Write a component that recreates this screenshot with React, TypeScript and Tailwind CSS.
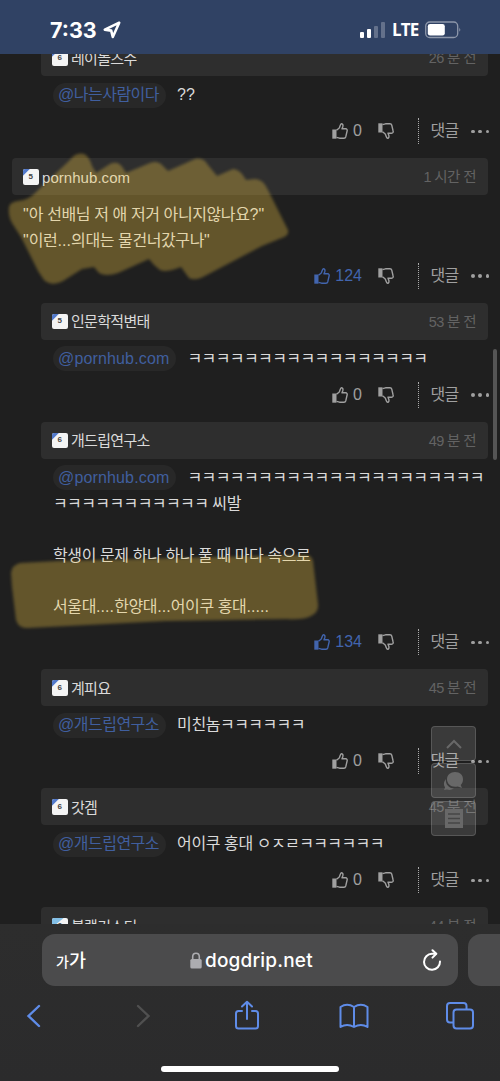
import clsx from "clsx";

type Comment = {
  id: number;
  author: string;
  level: number;
  time: string;
  nested?: boolean;
  mention?: string;
  lines: string[];
  likes: number;
  alt?: boolean;
};

const COMMENTS: Comment[] = [
  { id: 1, author: "레이놀즈수", level: 6, time: "26 분 전", nested: true, mention: "@나는사람이다", lines: ["??"], likes: 0 },
  { id: 2, author: "pornhub.com", level: 5, time: "1 시간 전", lines: ['"아 선배님 저 애 저거 아니지않나요?"', '"이런...의대는 물건너갔구나"'], likes: 124 },
  { id: 3, author: "인문학적변태", level: 5, time: "53 분 전", nested: true, mention: "@pornhub.com", lines: ["ㅋㅋㅋㅋㅋㅋㅋㅋㅋㅋㅋㅋㅋㅋㅋㅋㅋ"], likes: 0 },
  {
    id: 4,
    author: "개드립연구소",
    level: 6,
    time: "49 분 전",
    nested: true,
    mention: "@pornhub.com",
    lines: [
      "ㅋㅋㅋㅋㅋㅋㅋㅋㅋㅋㅋㅋㅋㅋㅋㅋㅋㅋㅋㅋㅋ",
      "ㅋㅋㅋㅋㅋㅋㅋㅋㅋㅋㅋ 씨발",
      "",
      "학생이 문제 하나 하나 풀 때 마다 속으로",
      "",
      "서울대....한양대...어이쿠 홍대.....",
    ],
    likes: 134,
  },
  { id: 5, author: "계피요", level: 6, time: "45 분 전", nested: true, mention: "@개드립연구소", lines: ["미친놈ㅋㅋㅋㅋㅋㅋ"], likes: 0 },
  { id: 6, author: "갓겜", level: 6, time: "45 분 전", nested: true, mention: "@개드립연구소", lines: ["어이쿠 홍대 ㅇㅈㄹㅋㅋㅋㅋㅋㅋ"], likes: 0 },
  { id: 7, author: "블랙기스디", level: 6, time: "44 분 전", nested: true, lines: [""], likes: 0, alt: true },
];

function Thumb({ down = false }: { down?: boolean }) {
  return (
    <svg viewBox="0 0 16 16" className={clsx("size-4 shrink-0", down && "-scale-y-100")} fill="none">
      <path d="M0.3 6.5H4.5V15.7H0.3Z" fill="currentColor" />
      <path
        d="M4.5 7.2L7 5.2C8.2 4 8 0.9 9.5 0.8C11 0.7 11.2 2.5 10.7 4L10 5.8H13.6C15 5.8 15.4 6.9 15.1 8L13.8 13.7C13.5 14.8 12.9 15.2 12 15.2H7.5L4.5 14.3"
        stroke="currentColor"
        strokeWidth="1.4"
        strokeLinejoin="round"
      />
    </svg>
  );
}

function Badge({ level, alt }: { level: number; alt?: boolean }) {
  return (
    <span className="relative flex size-[15.5px] shrink-0 items-center justify-center overflow-hidden rounded-[2px] bg-[#f4f4f4]">
      <svg viewBox="0 0 16 16" className="absolute inset-0">
        <path d={alt ? "M0 0H12L0 10Z" : "M0 0H7L0 7Z"} fill={alt ? "#83bfe6" : "#5279ca"} />
      </svg>
      <span className="relative font-['Liberation_Sans'] text-[8px] font-bold leading-none text-[#444]">{level}</span>
    </span>
  );
}

// Hangul runs sit tighter than punctuation, loose jamo tighter still
function CommentLine({ text }: { text: string }) {
  const runs = text.match(/[ㄱ-ㅎ]+|[."?]+|[^ㄱ-ㅎ."?]+/g) ?? [];
  return (
    <span>
      {runs.map((run, i) => (
        <span
          key={i}
          className={clsx(
            /^[ㄱ-ㅎ]/.test(run) ? "tracking-[-0.6px]" : /^[."?]/.test(run) ? "tracking-[0.1px]" : "tracking-[-0.4px]",
          )}
        >
          {run}
        </span>
      ))}
    </span>
  );
}

function CommentItem({ comment }: { comment: Comment }) {
  const { author, level, time, nested, mention, lines, likes, alt } = comment;
  return (
    <article className={clsx("mr-3", nested ? "ml-[41px]" : "ml-3")}>
      <header className="flex h-[37px] items-center rounded-[4px] bg-[#2e2e2e] pl-[11px] pr-3">
        <Badge level={level} alt={alt} />
        <span className="ml-[3.5px] pt-[2px] text-[15px] tracking-[-0.7px] text-[#dadada]">
          <span className={author === "pornhub.com" ? "tracking-[0.05px]" : ""}>{author}</span>
        </span>
        <span className="ml-auto pt-[2px] text-[14.5px] tracking-[-0.6px] text-[#636363]">{time}</span>
      </header>
      <div className={clsx("mr-[-20px] pt-[6px] text-base text-[#dadada]", nested ? "pl-3" : "pl-[11px]")}>
        {lines.map((line, i) => (
          <div key={i} className={clsx("flex h-[25.7px] items-center whitespace-pre", !(i === 0 && mention) && "pt-[2px]")}>
            {i === 0 && mention && (
              <span
                className={clsx(
                  "mr-[11px] flex h-[25px] items-center rounded-full bg-[#282828] pl-[5px] pr-[7px] text-[#405f9f]",
                  mention === "@pornhub.com" ? "tracking-[0.15px]" : "tracking-[-0.5px]",
                )}
              >
                {mention}
              </span>
            )}
            <CommentLine text={line} />
          </div>
        ))}
      </div>
      <div className="mb-[14px] mr-[-1px] mt-[10.3px] flex h-[26px] items-center justify-end text-base text-[#a0a0a0]">
        <span className={clsx("flex items-center gap-[5px]", likes > 0 && "text-[#4265ae]")}>
          <Thumb />
          {likes}
        </span>
        <span className="ml-4 flex">
          <Thumb down />
        </span>
        <span className="ml-6 h-full border-l border-dotted border-[#aaa]" />
        <span className="ml-[11.5px] w-[28.5px] whitespace-nowrap tracking-[-0.6px]">댓글</span>
        <span className="ml-3 flex w-[18px] justify-between">
          <i className="size-[3.5px] rounded-full bg-[#a0a0a0]" />
          <i className="size-[3.5px] rounded-full bg-[#a0a0a0]" />
          <i className="size-[3.5px] rounded-full bg-[#a0a0a0]" />
        </span>
      </div>
    </article>
  );
}

function Highlights() {
  return (
    <svg className="pointer-events-none absolute inset-0 z-10" width="500" height="1081" viewBox="0 0 500 1081">
      <g fill="#fdcd46" fillOpacity="0.31" className="blur-[1.5px]">
        <path d="M9 207Q10 202 18 201Q28 200 34 194L70 160Q76 152 84 154Q89 156 92 166L96 173L110 164Q118 160 123 168L126 173L150 163Q158 160 163 166L168 171L195 159Q203 157 208 165L217 176L233 169Q240 169 246 180L255 179Q263 179 268 190L288 230Q289 235 284 237L262 246L203 277Q195 281 189 278L181 267Q166 273 160 270Q154 266 149 259L118 273Q106 277 99 273L94 267L82 269L63 281Q52 287 44 280L38 271L21 237L12 223Q8 216 9 207Z" />
        <path d="M11 573Q12 565 20 563L58 561L305 555Q311 554 313 561L318 604Q319 612 311 616Q303 620 287 619L165 621L28 628Q19 629 16 620L12 587Z" />
      </g>
    </svg>
  );
}

function FloatingButtons() {
  const box = "flex h-[35px] w-[45px] items-center justify-center rounded-[4px] border border-white/15 bg-white/12 text-[#686868]";
  return (
    <div className="absolute right-6 top-[726px] z-20 flex flex-col gap-[2.3px]">
      <button className={box}>
        <svg width="18" height="12" viewBox="0 0 18 12" fill="none">
          <path d="M2 10L9 3L16 10" stroke="currentColor" strokeWidth="2" />
        </svg>
      </button>
      <button className={box}>
        <svg width="21" height="20" viewBox="0 0 21 20" fill="currentColor">
          <path d="M12 1C17 1 20 4 20 8.3C20 11 19 13 17.7 14L19 17L14.7 15.5C8.5 17 4 13 4 8.3C4 4 7.5 1 12 1Z" />
          <path d="M3 8C2 13 6 17.3 11 17.5C8.7 19 6 19.3 4 18.5L1 19L2 16.5C0.2 13.8 0.7 10.3 3 8Z" />
        </svg>
      </button>
      <button className={box}>
        <svg width="20" height="21" viewBox="0 0 20 21" fill="none">
          <path d="M1 1H19V20H1Z" fill="currentColor" />
          <path d="M4 6H16M4 10.5H16M4 15H16" stroke="#454545" strokeWidth="1.3" />
        </svg>
      </button>
    </div>
  );
}

function StatusBar() {
  return (
    <div className="flex h-[54px] shrink-0 items-start bg-[#304264] pl-[50px] pr-[39px] pt-[17px] text-white">
      <div className="flex h-[26px] items-center gap-[5px]">
        <span className="w-[48px] pt-px font-[Inter] text-[21.5px] font-bold">7:33</span>
        <svg width="18" height="18" viewBox="0 0 18 18" fill="none" stroke="currentColor" strokeWidth="2.6" strokeLinejoin="round">
          <path d="M16.2 1.7L1.8 8.6L8.2 9.6L9.8 16Z" />
        </svg>
      </div>
      <div className="ml-auto flex h-[26px] items-center">
        <div className="flex items-end gap-[3px]">
          <i className="h-[6px] w-1 rounded-[1px] bg-white" />
          <i className="h-[9px] w-1 rounded-[1px] bg-white" />
          <i className="h-[12px] w-1 rounded-[1px] bg-white/25" />
          <i className="h-4 w-1 rounded-[1px] bg-white/25" />
        </div>
        <span className="ml-[7px] w-[26px] font-['Open_Sans'] text-[17px] font-bold tracking-[-0.8px]">LTE</span>
        <svg className="ml-[7px]" width="36" height="18" viewBox="0 0 36 18">
          <rect x="0.7" y="1" width="32" height="15.5" rx="4" fill="none" stroke="#fff" strokeOpacity="0.45" strokeWidth="1.3" />
          <rect x="2.8" y="3" width="17" height="11.5" rx="2.3" fill="#fff" />
          <path d="M34.4 6.5Q36 8.5 34.4 10.8Z" fill="#fff" fillOpacity="0.5" />
        </svg>
      </div>
    </div>
  );
}

function SafariBar() {
  return (
    <footer className="relative h-[157px] shrink-0 bg-gradient-to-b from-[#2d2d2d] to-[#2b2b2c] pt-[10px]">
      <div className="flex h-[52px] gap-[10px] overflow-hidden pl-[42px]">
        <div className="flex w-[416px] shrink-0 items-center rounded-[13px] bg-[#4b4b4c] pl-[14px] pr-4 text-white">
          <span className="flex w-[134px] items-baseline pt-[2px] font-medium">
            <span className="text-[14px]">가</span>
            <span className="text-[18.5px]">가</span>
          </span>
          <svg width="12" height="17" viewBox="0 0 12 17" fill="none">
            <rect x="0.3" y="7" width="11.4" height="9.5" rx="1.6" fill="#acacb0" />
            <path d="M2.7 8V4.7Q2.7 1.2 6 1.2Q9.3 1.2 9.3 4.7V8" stroke="#acacb0" strokeWidth="1.6" />
          </svg>
          <span className="ml-[3px] pt-[2px] font-[Inter] text-[19px] font-medium tracking-[0.2px]">dogdrip.net</span>
          <svg className="ml-auto" width="20" height="23" viewBox="0 0 20 23" fill="none" stroke="currentColor" strokeWidth="2" strokeLinecap="round" strokeLinejoin="round">
            <path d="M18 12.5A8 8 0 1 1 10 4.8H14" />
            <path d="M10.5 1.2L14.3 4.8L10.5 8.6" />
          </svg>
        </div>
        <div className="w-[60px] shrink-0 rounded-[13px] bg-[#4b4b4c]" />
      </div>
      <nav className="flex h-[59px] items-center pl-[26px] text-[#5f8ce8]">
        <svg width="15" height="24" viewBox="0 0 15 24" fill="none" stroke="currentColor" strokeWidth="2.4" strokeLinecap="round">
          <path d="M13 2L2.5 12L13 22" />
        </svg>
        <svg className="ml-[94.5px] text-[#505050]" width="15" height="24" viewBox="0 0 15 24" fill="none" stroke="currentColor" strokeWidth="2.4" strokeLinecap="round">
          <path d="M2 2L12.5 12L2 22" />
        </svg>
        <svg className="ml-[83.5px]" width="26" height="31" viewBox="0 0 26 31" fill="none" stroke="currentColor" strokeWidth="2" strokeLinecap="round" strokeLinejoin="round">
          <path d="M8 11H4.5Q2 11 2 13.5V26Q2 28.5 4.5 28.5H21.5Q24 28.5 24 26V13.5Q24 11 21.5 11H18" />
          <path d="M13 19V2M8 6.5L13 1.8L18 6.5" />
        </svg>
        <svg className="ml-[78.5px]" width="30" height="26" viewBox="0 0 30 26" fill="none" stroke="currentColor" strokeWidth="2" strokeLinejoin="round">
          <path d="M15 4Q8 -0.5 1.5 4V24Q8 20 15 24Q22 20 28.5 24V4Q22 -0.5 15 4V24" />
        </svg>
        <svg className="ml-[77.5px]" width="28" height="28" viewBox="0 0 28 28" fill="none" stroke="currentColor" strokeWidth="2">
          <path d="M7.5 20.5H4Q1 20.5 1 17.5V4Q1 1 4 1H17.5Q20.5 1 20.5 4V7.5" />
          <rect x="7.5" y="7.5" width="19.5" height="19" rx="3" />
        </svg>
      </nav>
      <div className="mx-auto mt-[21px] h-[6px] w-[178px] rounded-full bg-white" />
    </footer>
  );
}

export default function App() {
  return (
    <div className="relative flex h-[1081px] w-[500px] flex-col overflow-hidden bg-[#1f1f1f] font-['Liberation_Sans','Noto_Sans_CJK_KR',sans-serif]">
      <StatusBar />
      <main className="h-[870px] shrink-0 overflow-hidden">
        <div className="mt-[-14.7px]">
          {COMMENTS.map((comment) => (
            <CommentItem key={comment.id} comment={comment} />
          ))}
        </div>
      </main>
      <SafariBar />
      <Highlights />
      <FloatingButtons />
      <div className="absolute right-[3px] top-[349px] h-[111px] w-1 rounded-full bg-[#555]" />
    </div>
  );
}
